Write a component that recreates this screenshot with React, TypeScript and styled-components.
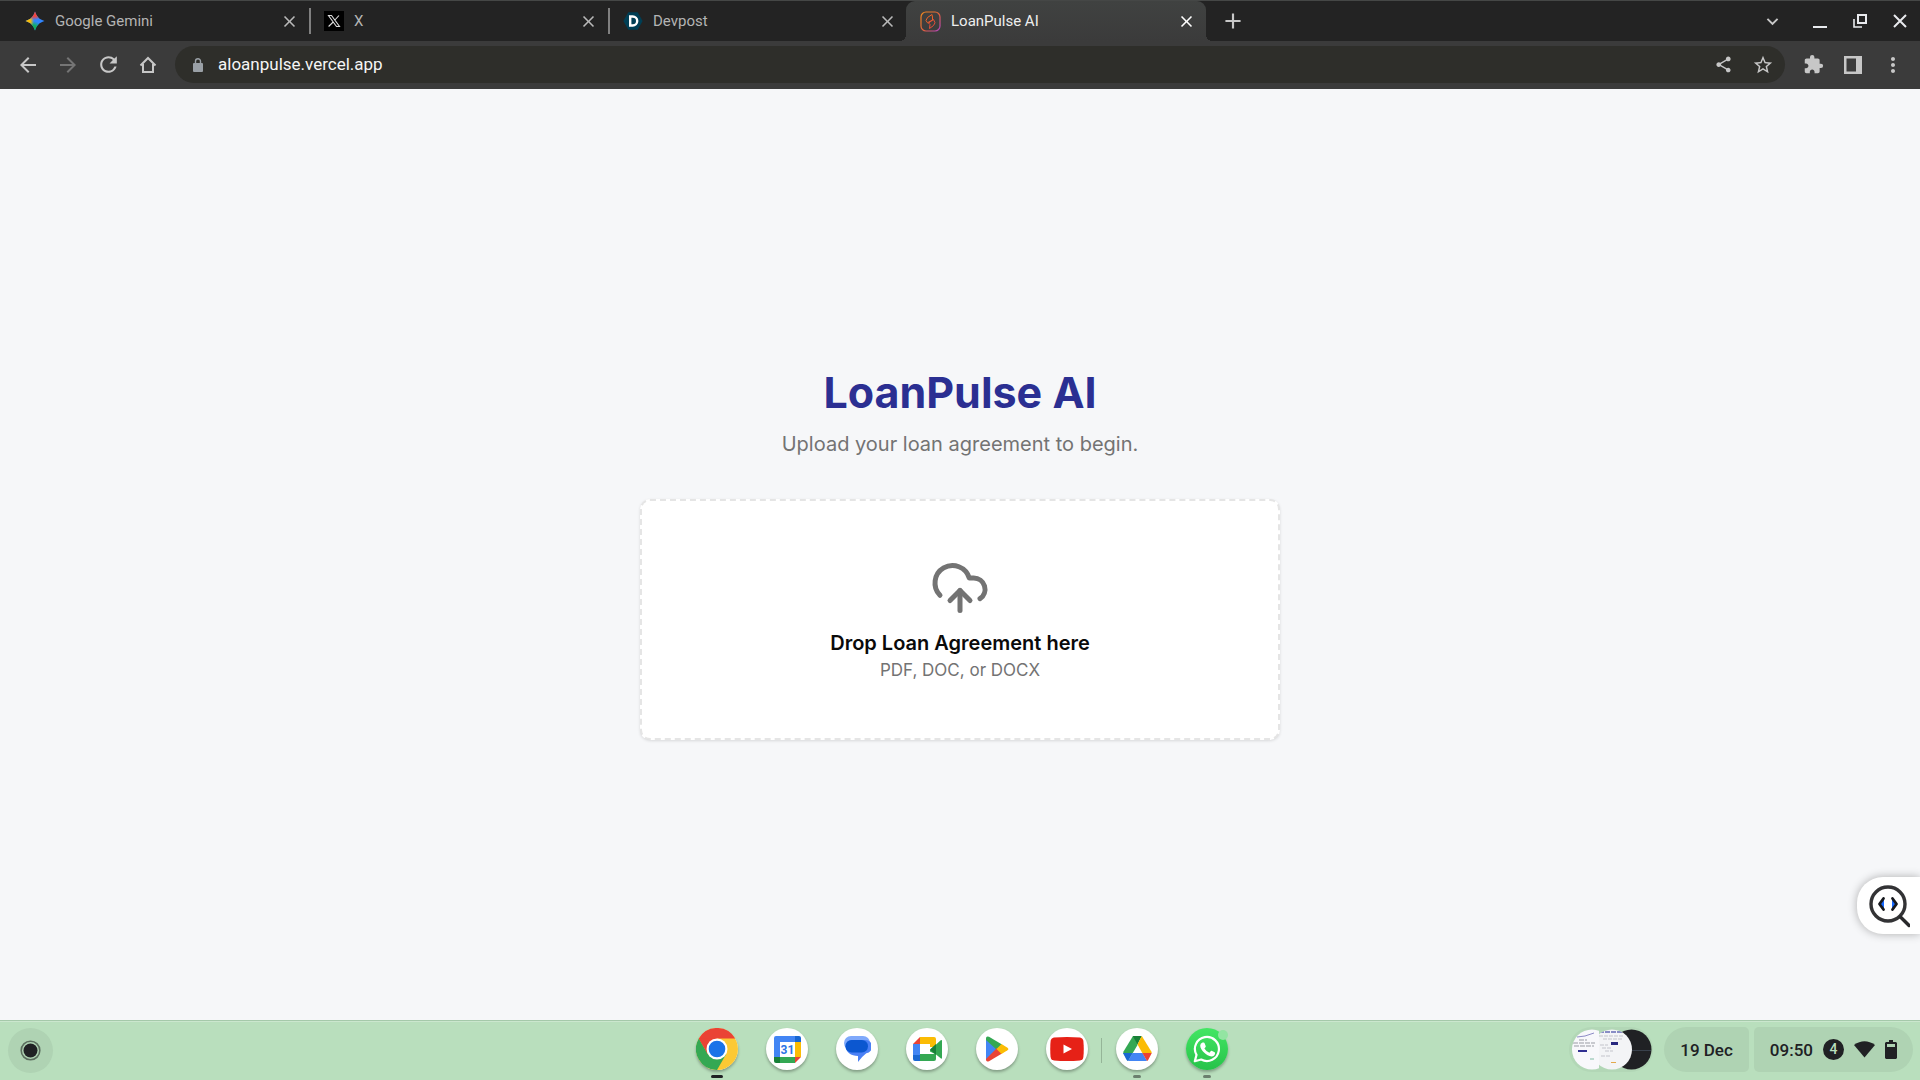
import React from "react";
import styled, { createGlobalStyle } from "styled-components";
import { CloudUpload } from "lucide-react";
import {
  MdArrowBack,
  MdArrowForward,
  MdRefresh,
  MdShare,
  MdStarBorder,
  MdExtension,
  MdMoreVert,
  MdClose,
  MdAdd,
  MdExpandMore,
} from "react-icons/md";

const GlobalStyle = createGlobalStyle`
  *, *::before, *::after { box-sizing: border-box; }
  body { margin: 0; font-family: Roboto, "Liberation Sans", sans-serif; }
  button { border: 0; padding: 0; margin: 0; background: none; font: inherit; color: inherit; cursor: pointer; }
  svg { display: block; flex: none; }
  h1, p { margin: 0; }
`;

const Screen = styled.div`
  display: flex;
  flex-direction: column;
  min-height: 100vh;
  background: #f6f7f9;
`;

const TabStrip = styled.header`
  display: flex;
  height: 41px;
  padding-left: 11px;
  background: #232323;
  border-top: 1px solid #454746;
  color: #b4b4b4;
`;

const Tabs = styled.nav`
  display: flex;
  margin-right: 7px;
`;

const Tab = styled.div<{ $active?: boolean }>`
  position: relative;
  display: flex;
  align-items: center;
  width: ${(p) => (p.$active ? 300 : 299)}px;
  margin-left: ${(p) => (p.$active ? -2 : 0)}px;
  padding: 0 ${(p) => (p.$active ? 10 : 11)}px 0 14px;
  font-size: 15px;
  color: ${(p) => (p.$active ? "#eeeeee" : "#b4b4b4")};
  background: ${(p) => (p.$active ? "linear-gradient(#404241, #3b3b3b)" : "transparent")};
  border-radius: 9px 9px 0 0;

  &::before,
  &::after {
    content: ${(p) => (p.$active ? '""' : "none")};
    position: absolute;
    bottom: 0;
    width: 6px;
    height: 6px;
  }
  &::before {
    right: 100%;
    background: radial-gradient(circle at 0 0, transparent 6px, #3b3b3b 6px);
  }
  &::after {
    left: 100%;
    background: radial-gradient(circle at 100% 0, transparent 6px, #3b3b3b 6px);
  }
`;

const TabDivider = styled.span`
  position: absolute;
  right: -1px;
  top: 7px;
  width: 2px;
  height: 26px;
  background: #808080;
`;

const TabLabel = styled.button`
  display: flex;
  flex: 1;
  align-items: center;
  gap: 10px;
  height: 100%;
  text-align: left;
`;

const IconButton = styled.button<{ $color?: string }>`
  display: flex;
  align-items: center;
  justify-content: center;
  width: 40px;
  height: 39px;
  color: ${(p) => p.$color ?? "#c7c7c7"};
`;

const CloseTab = styled(IconButton)`
  width: 20px;
  height: 20px;
`;

const WindowButtons = styled.div`
  display: flex;
  align-items: center;
  margin-left: auto;
`;

const TabSearch = styled(IconButton)`
  margin-right: 8px;
`;

const Toolbar = styled.div`
  display: flex;
  align-items: center;
  height: 48px;
  padding: 0 7px 1px 8px;
  background: #3b3b3b;
`;

const AddressBar = styled.form`
  display: flex;
  flex: 1;
  align-items: center;
  height: 37px;
  margin: 0 8px 0 7px;
  padding: 0 2px 0 15px;
  border-radius: 19px;
  background: #2e2e2a;
  color: #9aa0a6;
`;

const Address = styled.input`
  flex: 1;
  min-width: 0;
  margin-left: 12px;
  padding: 0;
  border: 0;
  outline: 0;
  background: none;
  color: #f5f5f5;
  font: 17px/23px Roboto, "Liberation Sans", sans-serif;
`;

const Page = styled.main`
  position: relative;
  display: flex;
  flex: 1;
  flex-direction: column;
  align-items: center;
  justify-content: center;
  padding: 24px 24px 26px;
  background: #f6f7f9;
  font-family: Inter, "Liberation Sans", sans-serif;
  text-align: center;
`;

const Title = styled.h1`
  color: #2b2f92;
  font-size: 43px;
  font-weight: 700;
  line-height: 50px;
`;

const Subtitle = styled.p`
  margin-top: 10px;
  color: #737373;
  font-size: 20px;
  line-height: 35px;
`;

const DropZone = styled.label`
  display: flex;
  flex-direction: column;
  align-items: center;
  width: 100%;
  max-width: 640px;
  margin-top: 37px;
  padding: 57px 24px 56px;
  border: 2px dashed #e5e5e5;
  border-radius: 10px;
  background: #ffffff;
  box-shadow: 0 1px 3px rgba(0, 0, 0, 0.12);
  color: #737373;
  cursor: pointer;
`;

const HiddenFile = styled.input`
  position: absolute;
  width: 1px;
  height: 1px;
  opacity: 0;
`;

const DropTitle = styled.span`
  margin-top: 10px;
  color: #0a0a0a;
  font-size: 20px;
  font-weight: 600;
  line-height: 30px;
`;

const DropHint = styled.span`
  font-size: 17px;
  line-height: 24px;
`;

const Inspector = styled.button`
  position: absolute;
  right: 0;
  bottom: 86px;
  display: flex;
  align-items: center;
  width: 63px;
  height: 57px;
  padding-left: 11px;
  border-radius: 26px 0 0 26px;
  background: #ffffff;
  box-shadow: 0 0 10px rgba(0, 0, 0, 0.3);
`;

const Shelf = styled.footer`
  display: grid;
  grid-template-columns: 1fr auto 1fr;
  height: 60px;
  border-top: 1px solid #a5c9aa;
  background: #b9dfbd;
  box-shadow: inset 0 1px 0 #cbe7ce;
`;

const ShelfStart = styled.div`
  display: flex;
  align-items: center;
  padding-left: 8px;
`;

const Launcher = styled.button`
  width: 45px;
  height: 45px;
  border-radius: 50%;
  background: #afd3b3;
`;

const Apps = styled.nav`
  display: flex;
  align-items: flex-start;
  gap: 28px;
  padding-top: 7px;
  margin-left: 4px;
`;

const AppButton = styled.button<{ $bg?: string; $split?: boolean }>`
  position: relative;
  display: flex;
  align-items: center;
  justify-content: center;
  width: 42px;
  height: 42px;
  border-radius: 50%;
  background: ${(p) => p.$bg ?? "#ffffff"};
  box-shadow: 0 2px 3px rgba(0, 0, 0, 0.3);

  &::before {
    content: ${(p) => (p.$split ? '""' : "none")};
    position: absolute;
    left: -15px;
    top: 10px;
    width: 1px;
    height: 25px;
    background: #95b598;
  }
`;

const Running = styled.span<{ $active?: boolean }>`
  position: absolute;
  bottom: -8px;
  width: ${(p) => (p.$active ? 12 : 8)}px;
  height: 3px;
  border-radius: 2px;
  background: ${(p) => (p.$active ? "#202124" : "#6b806e")};
`;

const Badge = styled.span`
  position: absolute;
  top: 2px;
  right: 0;
  width: 10px;
  height: 10px;
  border-radius: 50%;
  background: #93e5a2;
`;

const Status = styled.div`
  display: flex;
  align-items: center;
  justify-content: flex-end;
  padding: 0 7px 2px 0;
  color: #202124;
  font-size: 17px;
  font-weight: 500;
`;

const Recents = styled.button`
  margin-right: 11px;
`;

const Pill = styled.button<{ $end?: boolean }>`
  display: flex;
  align-items: center;
  height: 45px;
  padding: 0 16px;
  margin-left: ${(p) => (p.$end ? 5 : 0)}px;
  gap: 10px;
  border-radius: ${(p) => (p.$end ? "5px 23px 23px 5px" : "23px 5px 5px 23px")};
  background: #afd3b3;
`;

const Count = styled.span`
  display: flex;
  align-items: center;
  justify-content: center;
  width: 21px;
  height: 21px;
  border-radius: 50%;
  background: #202124;
  color: #b9dfbd;
  font-size: 14px;
  line-height: 21px;
`;

const GeminiIcon = () => (
  <svg width="20" height="20" viewBox="0 0 20 20">
    <defs>
      <radialGradient id="gemRed" gradientUnits="userSpaceOnUse" cx="9.5" cy="0" r="9">
        <stop offset="0.6" stopColor="#f2453c" />
        <stop offset="1" stopColor="#f2453c" stopOpacity="0" />
      </radialGradient>
      <radialGradient id="gemYellow" gradientUnits="userSpaceOnUse" cx="0" cy="10" r="9">
        <stop offset="0.6" stopColor="#fbbc04" />
        <stop offset="1" stopColor="#fbbc04" stopOpacity="0" />
      </radialGradient>
      <radialGradient id="gemGreen" gradientUnits="userSpaceOnUse" cx="8" cy="20" r="10">
        <stop offset="0.55" stopColor="#12b05c" />
        <stop offset="1" stopColor="#12b05c" stopOpacity="0" />
      </radialGradient>
    </defs>
    {["#3186ff", "url(#gemGreen)", "url(#gemYellow)", "url(#gemRed)"].map((fill) => (
      <path key={fill} fill={fill} d="M10 .5C11.600 5.600 14.400 8.400 19.500 10C14.400 11.600 11.600 14.400 10 19.500C8.400 14.400 5.600 11.600 .5 10C5.600 8.400 8.400 5.600 10 .5Z" />
    ))}
  </svg>
);

const XIcon = () => (
  <svg width="20" height="20" viewBox="0 0 20 20">
    <path fill="#000" d="M0 0h20v20H0z" />
    <path d="M4.5 4.5h3l8 11h-3zM15 4.5l-4.6 5M9.200 11l-4.600 4.500" fill="none" stroke="#ddd" strokeWidth="1.100" />
  </svg>
);

const DevpostIcon = () => (
  <svg width="20" height="20" viewBox="0 0 20 20">
    <path fill="#003e54" d="M5.300 1.200h9.400L19.600 10l-4.900 8.800H5.300L.4 10z" />
    <path fill="none" stroke="#fff" strokeWidth="2.400" d="M7.200 5.500h2.500a4.500 4.500 0 0 1 0 9H7.200z" />
  </svg>
);

const PulseIcon = () => (
  <svg width="21" height="21" viewBox="0 0 21 21" fill="none">
    <defs>
      <linearGradient id="pulse" x1="0" y1="0" x2="1" y2="1">
        <stop offset="0" stopColor="#f08a1d" />
        <stop offset="0.55" stopColor="#e0603f" />
        <stop offset="1" stopColor="#b344c8" />
      </linearGradient>
    </defs>
    <rect x="1" y="1" width="19" height="19" rx="5" stroke="url(#pulse)" strokeWidth="1.200" />
    <path stroke="#ea6228" strokeLinejoin="round" d="M12 3.500L7.500 6.500 6 9.500l1.500 2.300L12.500 9V6z" />
    <path stroke="#e8503a" strokeLinejoin="round" d="M13.500 8.500l1.500 3.300-1.500 2.700-4 3 .5-4-1.500-1.500z" />
  </svg>
);

const MinimizeIcon = () => (
  <svg width="16" height="16" viewBox="0 0 16 16">
    <path fill="currentColor" d="M1 13h14v2H1z" />
  </svg>
);

const RestoreIcon = () => (
  <svg width="16" height="16" viewBox="0 0 16 16" fill="none" stroke="currentColor" strokeWidth="2">
    <path d="M6 2h8v8H6z" />
    <path d="M2 6v8h8" strokeWidth="1.600" />
  </svg>
);

const CrossIcon = () => (
  <svg width="16" height="16" viewBox="0 0 16 16" fill="none" stroke="currentColor" strokeWidth="2">
    <path d="M2 2l12 12M14 2L2 14" />
  </svg>
);

const HomeIcon = () => (
  <svg width="18" height="18" viewBox="0 0 18 18" fill="none" stroke="currentColor" strokeWidth="2">
    <path d="M1.500 9.500L9 2l7.500 7.500M4 8v8h10V8" />
  </svg>
);

const LockIcon = () => (
  <svg width="16" height="16" viewBox="0 0 16 16">
    <rect x="3" y="6" width="10" height="9" rx="1" fill="currentColor" />
    <path d="M5.500 6V4.200a2.500 2.500 0 0 1 5 0V6" fill="none" stroke="currentColor" strokeWidth="1.400" />
  </svg>
);

const SidePanelIcon = () => (
  <svg width="18" height="18" viewBox="0 0 18 18" fill="currentColor" fillRule="evenodd">
    <path d="M0 0h18v18H0zM2.500 2.500v13H12v-13z" />
  </svg>
);

const InspectorIcon = () => (
  <svg width="42" height="44" viewBox="0 0 42 44" fill="none" strokeLinecap="round">
    <circle cx="20" cy="20" r="17" stroke="#333335" strokeWidth="3.400" />
    <path d="M32.500 33l8.500 8.500" stroke="#29292b" strokeWidth="3.400" />
    <path d="M16 15v10l-4-5zM24 15v10l4-5z" fill="#1769ff" />
    <path d="M15.500 14.500L11.500 20l4 5.500M24.500 14.500l4 5.500-4 5.500" stroke="#16181d" strokeWidth="2.800" strokeLinejoin="round" />
  </svg>
);

const LauncherIcon = () => (
  <svg width="45" height="45" viewBox="0 0 45 45">
    <circle cx="22.500" cy="22.500" r="9.300" fill="none" stroke="#5b6d5e" strokeWidth="1.600" />
    <circle cx="22.500" cy="22.500" r="7" fill="#202124" />
  </svg>
);

const ChromeIcon = () => (
  <svg width="42" height="42" viewBox="0 0 48 48">
    <circle cx="24" cy="24" r="24" fill="#fcc934" />
    <path fill="#ea4335" d="M3.200 12A24 24 0 0 1 44.800 12H24L14 30z" />
    <path fill="#34a853" d="M3.200 12A24 24 0 0 0 24 48L34.400 30 24 24 13.600 30z" />
    <path fill="#ea4335" d="M3.200 12L13.600 30 24 12z" />
    <circle cx="24" cy="24" r="12" fill="#fff" />
    <circle cx="24" cy="24" r="9.500" fill="#1a73e8" />
  </svg>
);

const CalendarIcon = () => (
  <svg width="27" height="27" viewBox="0 0 27 27">
    <path fill="#4285f4" d="M2 0h19v6H6v15H0V2a2 2 0 0 1 2-2z" />
    <path fill="#1967d2" d="M21 0h4a2 2 0 0 1 2 2v4h-6z" />
    <path fill="#fbbc04" d="M21 6h6v15h-6z" />
    <path fill="#34a853" d="M6 21h15v6H6z" />
    <path fill="#188038" d="M0 21h6v6H2a2 2 0 0 1-2-2z" />
    <path fill="#ea4335" d="M21 21h6l-6 6z" />
    <path fill="#fff" d="M6 6h15v15H6z" />
    <text x="13.500" y="17.500" textAnchor="middle" fontFamily="Roboto, sans-serif" fontSize="12" fontWeight="700" fill="#2b74e4">31</text>
  </svg>
);

const MessagesIcon = () => (
  <svg width="28" height="28" viewBox="0 0 28 28">
    <path fill="#7fa9fb" d="M8 1h12a7 7 0 0 1 0 14H8A7 7 0 0 1 8 1z" />
    <path fill="#4a80f5" d="M9 5h12.500a6.500 6.500 0 0 1 1.800 13.200q-5 3.800-8.300 8.800v-6C8 21 2.500 17 2.500 11A6 6 0 0 1 9 5z" />
    <rect x="2.500" y="5" width="22.500" height="12.500" rx="6.200" fill="#0b57d0" />
  </svg>
);

const MeetIcon = () => (
  <svg width="29" height="25" viewBox="0 0 29 25">
    <path fill="#ea4335" d="M7 0v7H0z" />
    <path fill="#4285f4" d="M0 7h7v11H0z" />
    <path fill="#1967d2" d="M0 18h7v6H2a2 2 0 0 1-2-2z" />
    <path fill="#34a853" d="M7 17h16v5a2 2 0 0 1-2 2H7z" />
    <path fill="#fbbc04" d="M7 0h14a2 2 0 0 1 2 2v8h-6V7H7z" />
    <path fill="#34a853" d="M17 13l11-10a.8.8 0 0 1 1 .8v17a.8.8 0 0 1-1 .8l-5-4-6-3z" />
    <path fill="#188038" d="M17 12.500L23 7v11z" />
  </svg>
);

const PlayIcon = () => (
  <svg width="24" height="26" viewBox="0 0 24 26">
    <path fill="#4285f4" d="M1 1.500v23L13 13z" />
    <path fill="#34a853" d="M1 2.500Q1-.5 4 .8L17 8.500 12 14 1 4z" />
    <path fill="#ea4335" d="M1 23.500q0 3 3 1.700L17 17.500 12 12 1 23z" />
    <path fill="#fbbc04" d="M16.500 8l6 3.700q1.700 1.300 0 2.600l-6 3.700-5-5z" />
  </svg>
);

const YouTubeIcon = () => (
  <svg width="34" height="24" viewBox="0 0 34 24">
    <path fill="#e62117" d="M4 .5Q17-.5 30 .5 33 1 33.400 4q.7 8 0 16-.4 3-3.400 3.500-13 1-26 0Q1 23 .6 20q-.7-8 0-16Q1 1 4 .5z" />
    <path fill="#fff" d="M13.500 7.500v9L22 12z" />
  </svg>
);

const DriveIcon = () => (
  <svg width="29" height="26" viewBox="0 0 29 26">
    <path fill="#34a853" d="M10 0h4.500v9L5 25 .5 17.500Q0 16.500.5 15.500z" />
    <path fill="#188038" d="M9.800 0h9L14.500 8.500z" />
    <path fill="#fbbc04" d="M18.800 0l9.500 15.500.5 1.500h-9.500L14.500 8.500z" />
    <path fill="#1967d2" d="M0 17h9.500L5 25q-1-.5-1.500-1.300z" />
    <path fill="#4285f4" d="M9.500 17h10L24 25H5z" />
    <path fill="#ea4335" d="M19.300 17h9.500l-3.500 6.700Q25 24.500 24 25z" />
  </svg>
);

const WhatsAppIcon = () => (
  <svg width="28" height="28" viewBox="0 0 28 28">
    <path fill="none" stroke="#fff" strokeWidth="2.200" strokeLinejoin="round" d="M1.800 26.200l1.700-6.300A12 12 0 1 1 8.200 24.500z" />
    <path fill="#fff" d="M9.500 7.500h1.300l.7.500 1.300 3.200-.2.700-1.200 1.500q1.800 3 5 4.300l1.500-1.700.7-.2 3.100 1.500.4.600q-.2 3.300-3.600 3.600C13.500 21 7.500 15.300 7.200 10.800q0-2.300 2.300-3.300z" />
  </svg>
);

const RecentsArt = () => (
  <svg width="84" height="45" viewBox="0 0 84 45">
    <defs>
      <clipPath id="shotA"><circle cx="23" cy="22.500" r="20" /></clipPath>
      <clipPath id="shotB"><circle cx="43" cy="22.500" r="20" /></clipPath>
    </defs>
    <rect width="84" height="45" rx="22.500" fill="#b2d7b6" />
    <circle cx="62.500" cy="22.500" r="20" fill="#202124" />
    <path stroke="#39414c" d="M63 23.500h19" />
    <g clipPath="url(#shotB)">
      <path fill="#f3f4f6" d="M23 0h40v45H23z" />
      <path stroke="#666bb5" strokeWidth="1.500" strokeDasharray="5 1" d="M30 5h24" />
      <path stroke="#c3c4cb" strokeDasharray="4 1" d="M30 9h25M34 12h20M31 18h8M33 21h9M36 24h8M32 29h10" />
      <path fill="#28287f" d="M42 15h7v3h-7z" />
      <path fill="#e3a94c" d="M42 35h5v1h-5z" />
    </g>
    <g clipPath="url(#shotA)">
      <path fill="#f8f8fb" d="M3 2h27v41H3z" />
      <path stroke="#8c8bc5" fill="none" d="M8 10l8-1 9-3" />
      <path stroke="#999ba3" strokeDasharray="5 1" d="M4 16h22M10 13h8M5 19h20" />
      <path fill="#302f91" d="M9 23h9v2H9z" />
      <path stroke="#80baa4" d="M21 32h4" />
    </g>
  </svg>
);

const WifiIcon = () => (
  <svg width="21" height="17" viewBox="0 0 21 17">
    <path fill="currentColor" d="M0 4Q10.500-3.500 21 4L10.500 16.500z" />
  </svg>
);

const BatteryIcon = () => (
  <svg width="12" height="19" viewBox="0 0 12 19">
    <path fill="currentColor" fillRule="evenodd" d="M4 0h4v2h3l1 1v15l-1 1H1l-1-1V3l1-1h3zM2 4v3h8V4z" />
  </svg>
);

type TabData = { title: string; icon: React.ReactNode; active?: boolean; line?: boolean };

const tabs: TabData[] = [
  { title: "Google Gemini", icon: <GeminiIcon />, line: true },
  { title: "X", icon: <XIcon />, line: true },
  { title: "Devpost", icon: <DevpostIcon /> },
  { title: "LoanPulse AI", icon: <PulseIcon />, active: true },
];

type AppData = { name: string; icon: React.ReactNode; bg?: string; running?: boolean; active?: boolean; split?: boolean; badge?: boolean };

const apps: AppData[] = [
  { name: "Chrome", icon: <ChromeIcon />, running: true, active: true },
  { name: "Calendar", icon: <CalendarIcon /> },
  { name: "Messages", icon: <MessagesIcon /> },
  { name: "Meet", icon: <MeetIcon /> },
  { name: "Play Store", icon: <PlayIcon /> },
  { name: "YouTube", icon: <YouTubeIcon /> },
  { name: "Drive", icon: <DriveIcon />, running: true, split: true },
  { name: "WhatsApp", icon: <WhatsAppIcon />, bg: "linear-gradient(#43e663, #27c24a)", running: true, badge: true },
];

export default function App() {
  return (
    <Screen>
      <GlobalStyle />
      <TabStrip>
        <Tabs aria-label="Tabs">
          {tabs.map((t) => (
            <Tab key={t.title} $active={t.active}>
              <TabLabel>
                {t.icon}
                {t.title}
              </TabLabel>
              <CloseTab $color={t.active ? "#fff" : "#b9b9b9"} aria-label={`Close ${t.title}`}>
                <MdClose size={19} />
              </CloseTab>
              {t.line && <TabDivider />}
            </Tab>
          ))}
        </Tabs>
        <IconButton aria-label="New tab">
          <MdAdd size={26} />
        </IconButton>
        <WindowButtons>
          <TabSearch aria-label="Search tabs"><MdExpandMore size={23} /></TabSearch>
          <IconButton $color="#e8eaed" aria-label="Minimize"><MinimizeIcon /></IconButton>
          <IconButton $color="#e8eaed" aria-label="Restore"><RestoreIcon /></IconButton>
          <IconButton $color="#e8eaed" aria-label="Close window"><CrossIcon /></IconButton>
        </WindowButtons>
      </TabStrip>
      <Toolbar>
        <IconButton aria-label="Back"><MdArrowBack size={24} /></IconButton>
        <IconButton $color="#757575" aria-label="Forward"><MdArrowForward size={24} /></IconButton>
        <IconButton aria-label="Reload"><MdRefresh size={25} /></IconButton>
        <IconButton aria-label="Home"><HomeIcon /></IconButton>
        <AddressBar>
          <LockIcon />
          <Address aria-label="Address" defaultValue="aloanpulse.vercel.app" />
          <IconButton type="button" aria-label="Share"><MdShare size={19} /></IconButton>
          <IconButton type="button" aria-label="Bookmark"><MdStarBorder size={22} /></IconButton>
        </AddressBar>
        <IconButton aria-label="Extensions"><MdExtension size={21} /></IconButton>
        <IconButton aria-label="Side panel"><SidePanelIcon /></IconButton>
        <IconButton aria-label="Menu"><MdMoreVert size={24} /></IconButton>
      </Toolbar>
      <Page>
        <Title>LoanPulse AI</Title>
        <Subtitle>Upload your loan agreement to begin.</Subtitle>
        <DropZone>
          <CloudUpload size={60} />
          <DropTitle>Drop Loan Agreement here</DropTitle>
          <DropHint>PDF, DOC, or DOCX</DropHint>
          <HiddenFile type="file" accept=".pdf,.doc,.docx" />
        </DropZone>
        <Inspector aria-label="Inspect page"><InspectorIcon /></Inspector>
      </Page>
      <Shelf>
        <ShelfStart>
          <Launcher aria-label="Launcher"><LauncherIcon /></Launcher>
        </ShelfStart>
        <Apps aria-label="Apps">
          {apps.map((a) => (
            <AppButton key={a.name} aria-label={a.name} $bg={a.bg} $split={a.split}>
              {a.icon}
              {a.running && <Running $active={a.active} />}
              {a.badge && <Badge />}
            </AppButton>
          ))}
        </Apps>
        <Status>
          <Recents aria-label="Recent screenshots"><RecentsArt /></Recents>
          <Pill>19 Dec</Pill>
          <Pill $end>
            09:50
            <Count>4</Count>
            <WifiIcon />
            <BatteryIcon />
          </Pill>
        </Status>
      </Shelf>
    </Screen>
  );
}
